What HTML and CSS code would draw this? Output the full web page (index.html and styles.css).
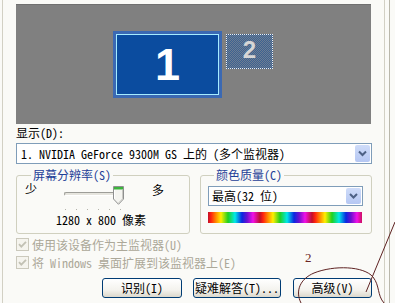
FILE: index.html
```html
<!DOCTYPE html>
<html lang="zh-CN">
<head>
<meta charset="utf-8">
<link rel="stylesheet" href="styles.css">
</head>
<body>
<div class="win">
  <div class="tab">
    <div class="screens">
      <div class="mon1"><div class="mon1-in">1</div></div>
      <div class="mon2">2</div>
    </div>
    <div class="lbl">显示(D):</div>
    <div class="combo">
      <span class="ctext">1. NVIDIA GeForce 9300M GS 上的 (多个监视器)</span>
      <span class="cbtn"><svg width="15" height="17" viewBox="0 0 15 17"><polyline points="4,6.5 7.5,10 11,6.5" fill="none" stroke="#4d6185" stroke-width="2"/></svg></span>
    </div>
    <div class="groups">
      <fieldset class="grp res">
        <legend>屏幕分辨率(S)</legend>
        <div class="sl-row">
          <span class="few">少</span>
          <div class="slider">
            <div class="track"></div>
            <svg class="thumb" width="11" height="19" viewBox="0 0 11 19"><path d="M0.5 0.5 H10.5 V13 L5.5 18.3 L0.5 13 Z" fill="#f4f4f0" stroke="#8e8f8f"/><rect x="1" y="1" width="9" height="2.5" fill="#3cb43c"/><path d="M1.5 4 V12.6" stroke="#ffffff"/><path d="M9.5 4 V12.8 L5.5 17" stroke="#c9c9c4" fill="none"/></svg>
          </div>
          <span class="many">多</span>
        </div>
        <div class="ticks"><i></i><i></i><i></i><i></i><i></i><i></i></div>
        <div class="restext">1280 x 800 像素</div>
      </fieldset>
      <fieldset class="grp col">
        <legend>颜色质量(C)</legend>
        <div class="combo small">
          <span class="ctext">最高(32 位)</span>
          <span class="cbtn"><svg width="15" height="16" viewBox="0 0 15 16"><polyline points="4,6 7.5,9.5 11,6" fill="none" stroke="#4d6185" stroke-width="2"/></svg></span>
        </div>
        <div class="spectrum"></div>
      </fieldset>
    </div>
    <div class="checks">
      <div class="chk"><svg width="13" height="13" viewBox="0 0 13 13"><rect x="0.5" y="0.5" width="12" height="12" fill="#f5f4ee" stroke="#cbc9bc"/><polyline points="3,6.2 5.3,8.6 10,3.8" fill="none" stroke="#c2c1b4" stroke-width="1.8"/></svg><span>使用该设备作为主监视器(U)</span></div>
      <div class="chk"><svg width="13" height="13" viewBox="0 0 13 13"><rect x="0.5" y="0.5" width="12" height="12" fill="#f5f4ee" stroke="#cbc9bc"/><polyline points="3,6.2 5.3,8.6 10,3.8" fill="none" stroke="#c2c1b4" stroke-width="1.8"/></svg><span>将 Windows 桌面扩展到该监视器上(E)</span></div>
    </div>
    <div class="btns">
      <button class="btn b1">识别(I)</button>
      <button class="btn b2">疑难解答(T)...</button>
      <button class="btn b3">高级(V)</button>
    </div>
  </div>
  <svg class="notes" width="395" height="303" viewBox="0 0 395 303">
    <text x="305" y="262" class="note-num">2</text>
    <path d="M301 303 C295 291 300 279 314 273 C334 265 364 266 373 277 C380 286 377 295 384 303" fill="none" stroke="#5e2222" stroke-width="1"/>
    <path d="M366 292 L395 222" fill="none" stroke="#5e2222" stroke-width="1"/>
  </svg>
</div>
</body>
</html>
```
FILE: styles.css
```css
html, body {
  margin: 0;
  padding: 0;
}
body {
  font-family: "Noto Sans Mono CJK SC", "Noto Sans CJK SC", sans-serif;
  font-size: 12px;
  color: #000;
}
.win {
  position: relative;
  width: 395px;
  height: 303px;
  overflow: hidden;
  background: linear-gradient(to right, transparent 389px, #b9b7ab 389px, #b9b7ab 390px, transparent 390px), #fafaf7;
}
.tab {
  box-sizing: border-box;
  margin-left: 2px;
  width: 383px;
  height: 303px;
  border-left: 1px solid #d2d0c4;
  border-right: 1px solid #d2d0c4;
  padding: 4px 12px 0 13px;
}
.screens {
  box-sizing: border-box;
  width: 355px;
  height: 120px;
  background: #808080;
  border-top: 1px solid #707070;
  display: flex;
  align-items: flex-start;
  padding: 26px 0 0 97px;
  gap: 4px;
}
.mon1 {
  box-sizing: border-box;
  width: 109px;
  height: 67px;
  background: #3b69b3;
  padding: 3px;
}
.mon1-in {
  box-sizing: border-box;
  height: 100%;
  border: 1px solid #a6ecff;
  background: #0b4c9f;
  color: #fff;
  font-family: "Liberation Sans", Arial, sans-serif;
  font-weight: bold;
  font-size: 45px;
  line-height: 59px;
  text-align: center;
}
.mon2 {
  box-sizing: border-box;
  margin-top: 3px;
  width: 47px;
  height: 35px;
  border: 1px dotted #f2f2f2;
  background: repeating-conic-gradient(#3d6291 0 25%, #6d7d92 0 50%) 0 0 / 2px 2px;
  color: #d6d6d6;
  font-family: "Liberation Sans", Arial, sans-serif;
  font-weight: bold;
  font-size: 24px;
  line-height: 30px;
  text-align: center;
}
.lbl {
  margin-top: 2px;
  line-height: 14px;
  height: 14px;
}
.combo {
  box-sizing: border-box;
  margin-top: 3px;
  height: 21px;
  border: 1px solid #7f9db9;
  background: #fff;
  display: flex;
  align-items: center;
  padding-left: 4px;
  padding-right: 1px;
}
.ctext {
  line-height: 14px;
  white-space: nowrap;
}
.cbtn {
  margin-left: auto;
  width: 15px;
  height: 17px;
  border-radius: 2px;
  background: linear-gradient(#cfdcf9, #b5c7f3);
  border: 0;
  display: flex;
}
.combo.small {
  margin-top: 4px;
  height: 20px;
  padding-left: 3px;
}
.combo.small .cbtn {
  height: 16px;
}
.groups {
  margin-top: 4px;
  display: flex;
  gap: 10px;
}
.grp {
  box-sizing: border-box;
  margin: 0;
  min-width: 0;
  height: 66px;
  border: 1px solid #d0d0bf;
  border-radius: 3px;
}
.grp legend {
  color: #1e3f98;
  line-height: 14px;
  padding: 0 2px;
  margin-left: 6px;
}
.res {
  width: 174px;
  padding: 0 8px 0 8px;
}
.col {
  width: 172px;
  padding: 0 8px 0 7px;
}
.sl-row {
  display: flex;
  align-items: flex-start;
  height: 24px;
}
.few {
  line-height: 14px;
}
.slider {
  margin-left: 27px;
  margin-top: 4px;
  display: flex;
  align-items: center;
  height: 19px;
}
.track {
  box-sizing: border-box;
  width: 52px;
  height: 4px;
  border-top: 1px solid #9d9d98;
  border-left: 1px solid #9d9d98;
  border-bottom: 1px solid #ffffff;
  background: #e6e5de;
  border-radius: 2px;
  margin-top: -3px;
}
.thumb {
  margin-left: -3px;
  display: block;
}
.many {
  margin-left: 28px;
  margin-top: 1px;
  line-height: 14px;
}
.ticks {
  margin-top: 3px;
  margin-left: 40px;
  display: flex;
  gap: 10px;
  height: 1px;
}
.ticks i {
  width: 1px;
  height: 1px;
  background: #b4b4ac;
}
.restext {
  margin-top: 3px;
  margin-left: 31px;
  line-height: 14px;
}
.spectrum {
  margin-top: 6px;
  height: 11px;
  width: 154px;
  background: repeating-linear-gradient(to right, #c0102a 0, #ff2010 3px, #ff8a00 8px, #ffee00 13px, #20d020 20px, #00e8e8 27px, #0a28e0 34px, #6a10d0 39px, #f010e8 45px, #c0102a 52px);
}
.checks {
  margin-top: 4px;
  display: flex;
  flex-direction: column;
  gap: 5px;
}
.chk {
  display: flex;
  align-items: center;
  height: 13px;
  color: #aca899;
}
.chk svg {
  display: block;
  margin-right: 3px;
}
.chk span {
  line-height: 13px;
  white-space: nowrap;
}
.btns {
  margin-top: 9px;
  padding-left: 86px;
  display: flex;
  gap: 11px;
}
.btn {
  box-sizing: border-box;
  height: 20px;
  padding: 0;
  border: 1px solid #003c74;
  border-radius: 3px;
  background: linear-gradient(#ffffff, #f4f3ee 60%, #dcd8cc);
  font-family: inherit;
  font-size: 12px;
  line-height: 16px;
  color: #000;
  white-space: nowrap;
}
.b1 { width: 81px; }
.b2 { width: 89px; }
.b3 { width: 80px; margin-left: 1px; }
.notes {
  position: absolute;
  top: 0;
  left: 0;
  pointer-events: none;
}
.note-num {
  font-family: "Liberation Serif", serif;
  font-size: 13px;
  fill: #6a2424;
}
```
